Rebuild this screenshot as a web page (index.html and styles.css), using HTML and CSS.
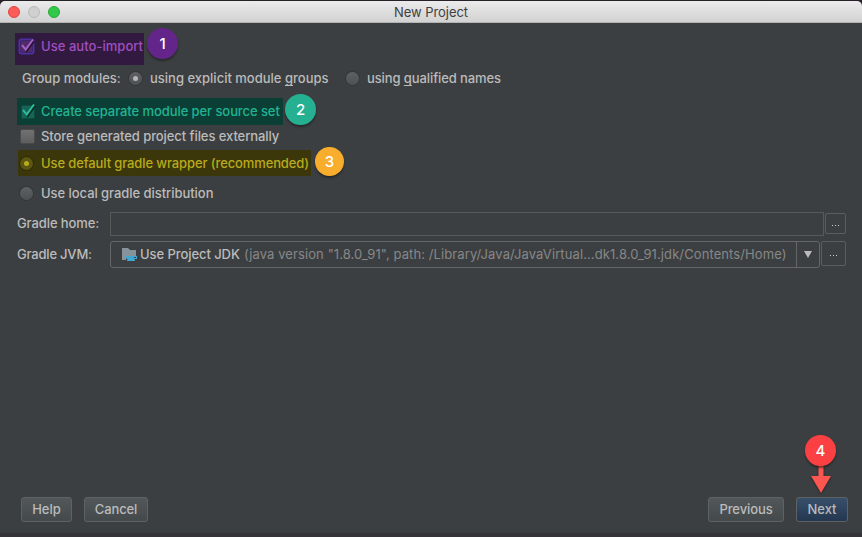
FILE: index.html
```html
<!DOCTYPE html>
<html lang="en">
<head>
<meta charset="utf-8">
<title>New Project</title>
<link rel="stylesheet" href="styles.css">
</head>
<body>
<div class="window">
  <header class="titlebar">
    <div class="lights"><i class="light close"></i><i class="light minimize"></i><i class="light expand"></i></div>
    <h1>New Project</h1>
  </header>
  <main>
    <div class="row auto-import">
      <label class="mark purple"><svg class="box" viewBox="0 0 18 18"><rect class="glow" x="1.5" y="2.5" width="14" height="14" rx="2"/><rect class="face" x="3" y="4" width="11" height="11" rx="1"/><path class="shade" d="M5 9l3.500 5 7.500-10"/><path class="tick" d="M4 8l3.700 4.500L15 2.500"/></svg><span class="t">Use auto-import</span></label>
      <b class="badge one">1</b>
    </div>
    <div class="row groups">
      <span class="t group-label">Group modules:</span>
      <label class="option explicit"><i class="radio on"></i><span class="t">using explicit module <u>g</u>roups</span></label>
      <label class="option qualified"><i class="radio"></i><span class="t">using <u>q</u>ualified names</span></label>
    </div>
    <div class="row source-set">
      <label class="mark teal"><svg class="box" viewBox="0 0 18 18"><rect class="face" x="2.500" y="3.500" width="13" height="13" rx="1"/><path class="shade" d="M5 9l3.500 5 7.500-10"/><path class="tick" d="M4 8l3.700 4.500L15 2.500"/></svg><span class="t">Create separate module per source set</span></label>
      <b class="badge two">2</b>
    </div>
    <div class="row external">
      <label class="option"><i class="check"></i><span class="t">Store generated project files externally</span></label>
    </div>
    <div class="row wrapper">
      <label class="mark olive"><i class="radio on"></i><span class="t">Use default gradle wrapper (recommended)</span></label>
      <b class="badge three">3</b>
    </div>
    <div class="row local">
      <label class="option"><i class="radio"></i><span class="t">Use local gradle distribution</span></label>
    </div>
    <div class="field-row home">
      <span class="t field-label">Gradle home:</span>
      <div class="input"></div>
      <button class="dots"><i></i><i></i><i></i></button>
    </div>
    <div class="field-row jvm">
      <span class="t field-label">Gradle JVM:</span>
      <div class="combo">
        <svg class="folder" viewBox="0 0 16 16"><path fill="#87939a" d="M0 1h6l2 2h6v7H4v3H0z"/><path fill="#3fa7d0" d="M4 9h11v3h-2l-1 1H6l-2-2zM5 13h8v1H5z"/><path fill="#3c3f41" d="M12 10h2v1h-2z"/></svg>
        <span class="t jdk">Use Project JDK</span>
        <span class="t path">(java version "1.8.0_91", path: /Library/Java/JavaVirtual...dk1.8.0_91.jdk/Contents/Home)</span>
        <div class="arrow"><svg viewBox="0 0 8 7"><path fill="#bbb" d="M0 0h8L4 7z"/></svg></div>
      </div>
      <button class="dots"><i></i><i></i><i></i></button>
    </div>
  </main>
  <footer>
    <button class="btn help">Help</button>
    <button class="btn cancel">Cancel</button>
    <button class="btn previous">Previous</button>
    <div class="next-wrap">
      <button class="btn next">Next</button>
      <div class="pointer"><svg viewBox="0 0 24 32"><path fill="#fd5650" d="M9.500 0h5v15h7.500L12 32 2 15h7.500z"/></svg><b class="badge four">4</b></div>
    </div>
  </footer>
</div>
</body>
</html>
```
FILE: styles.css
```css
* { box-sizing: border-box; }
body { margin: 0; background: #252126; color: #bbb; font: 500 13px/18px Inter, "Liberation Sans", sans-serif; overflow: hidden; }
.window { width: 862px; height: 537px; padding-top: 1px; display: flex; flex-direction: column; background: linear-gradient(#252126 0 8px, #3c3f41 8px 533px, #353438 533px); }
.titlebar { height: 22px; flex: none; display: grid; grid-template-columns: 1fr auto 1fr; align-items: center; padding: 0 8px; background: linear-gradient(#ebebeb, #d2d2d2); border-bottom: 1px solid #b4b4b4; border-radius: 5px 5px 0 0; }
.titlebar h1 { margin: 0; font-size: 13px; font-weight: 400; letter-spacing: -.06px; color: #404040; }
.lights { display: flex; gap: 8px; }
.light { width: 12px; height: 12px; border-radius: 50%; border: 1px solid; }
.close { background: #fc5b57; border-color: #e2463f; }
.minimize { background: #d0d0d0; border-color: #bababa; }
.expand { background: #34c84a; border-color: #25ab35; }
main { flex: 1; }
.t { white-space: nowrap; }
.row, .option, .mark { display: flex; align-items: center; }
.row { padding-left: 20px; }
.auto-import { height: 40px; padding-left: 15px; align-items: flex-start; }
.auto-import .mark { height: 32px; margin-top: 10px; padding-bottom: 7px; letter-spacing: .04px; }
.groups { height: 30px; padding-left: 22px; }
.source-set { height: 33px; margin-top: 2px; padding-left: 17px; }
.external { height: 17px; padding-bottom: 1px; letter-spacing: -.075px; }
.wrapper { height: 26px; padding-left: 18px; margin-top: 5px; }
.local { height: 34px; letter-spacing: -.05px; }
.purple { width: 129px; background: #32193f; color: #a04fc0; padding-left: 3px; }
.teal { width: 266px; height: 27px; background: #0b3f35; color: #20b493; padding: 0 0 2px 2px; letter-spacing: -.08px; }
.olive { width: 293px; height: 26px; background: #3b370b; color: #b9aa1d; padding-left: 2px; letter-spacing: -.115px; }
.box { width: 18px; height: 18px; flex: none; margin-right: 5px; }
.teal .box { margin-right: 4px; }
.tick, .shade { fill: none; stroke-width: 2; }
.purple .tick { stroke: #a561c4; }
.purple .shade { stroke: #241030; }
.purple .face { fill: #532a69; }
.purple .glow { fill: none; stroke: #4b32a0; stroke-width: 2; }
.teal .tick { stroke: #2cbc9d; }
.teal .shade { stroke: #06251f; }
.teal .face { fill: #176556; stroke: #0a4e40; }
.radio { width: 13px; height: 13px; flex: none; border-radius: 50%; background: linear-gradient(#5d6163, #4d5153); box-shadow: 0 0 0 1px #343738; display: grid; place-items: center; }
.radio.on::after { content: ""; width: 5px; height: 5px; border-radius: 50%; background: #b5b5b5; }
.olive .radio { background: #5b5612; box-shadow: 0 0 0 1px #2f2b08; }
.olive .radio.on::after { background: #b9aa1d; }
.option .radio, .olive .radio { margin-right: 8px; }
.check { width: 13px; height: 13px; flex: none; margin: 0 7px 0 1px; background: linear-gradient(#717171, #5e5e5e); box-shadow: 0 0 0 1px #4a4a4a; border-radius: 1px; }
.group-label { width: 107px; }
.explicit { width: 217px; }
.qualified { letter-spacing: -.1px; }
u { text-decoration-thickness: 1px; text-underline-offset: 2px; text-decoration-skip-ink: none; }
.badge { width: 31px; height: 31px; flex: none; border-radius: 50%; color: #fff; display: grid; place-items: center; font-size: 15px; font-weight: 500; box-shadow: 0 2px 2px #191b1c99; }
.one { background: #64258a; margin: 5px 0 0 3px; }
.two { background: #25b092; margin: -4px 0 0 2px; }
.three { width: 29px; height: 29px; background: #f8ad2d; margin: -3px 0 0 4px; }
.four { background: #fb4044; position: absolute; top: 0; left: 0; }
.field-row { display: flex; align-items: center; padding-left: 17px; }
.field-label { width: 93px; padding-bottom: 2px; letter-spacing: -.1px; }
.jvm .field-label { letter-spacing: -.2px; }
.home { height: 24px; margin-top: 2px; }
.input { width: 714px; height: 24px; border: 1px solid #57595a; margin-right: 1px; }
.dots { height: 21px; width: 21px; margin-top: -1px; padding: 3px 0 0; border: 1px solid #5b5d5e; border-radius: 2px; background: none; display: flex; gap: 2px; align-items: center; justify-content: center; }
.dots i { width: 1px; height: 1px; background: #ccc; }
.jvm { height: 27px; margin-top: 5px; }
.combo { width: 710px; height: 27px; border: 1px solid #646667; border-radius: 3px; display: flex; align-items: center; margin-right: 1px; padding-left: 11px; }
.combo .t { padding-bottom: 2px; }
.jvm .dots { width: 25px; height: 25px; margin-top: -2px; }
.folder { width: 16px; height: 16px; margin-right: 2px; flex: none; }
.jdk { width: 104px; letter-spacing: -.07px; }
.path { color: #878787; font-weight: 400; letter-spacing: .1px; }
.arrow { margin-left: auto; width: 23px; height: 25px; border-left: 1px solid #646667; display: grid; place-items: center; }
.arrow svg { width: 8px; height: 7px; }
footer { height: 40px; flex: none; display: flex; padding: 0 14px 0 21px; }
.btn { height: 25px; padding: 0 0 1px; border: 1px solid #5e6263; border-radius: 3px; background: linear-gradient(#525859, #444a4c); color: #bbb; font: inherit; }
.help { width: 51px; }
.cancel { width: 64px; margin-left: 12px; letter-spacing: -.1px; }
.previous { width: 76px; margin: 0 12px 0 auto; letter-spacing: -.1px; }
.next { width: 52px; background: linear-gradient(#384f6b, #243750); }
.next-wrap { position: relative; }
.pointer { position: absolute; left: 9px; top: -62px; width: 31px; height: 60px; }
.pointer svg { position: absolute; left: 4px; top: 26px; width: 24px; height: 32px; filter: drop-shadow(0 1px 1px #222); }
```
